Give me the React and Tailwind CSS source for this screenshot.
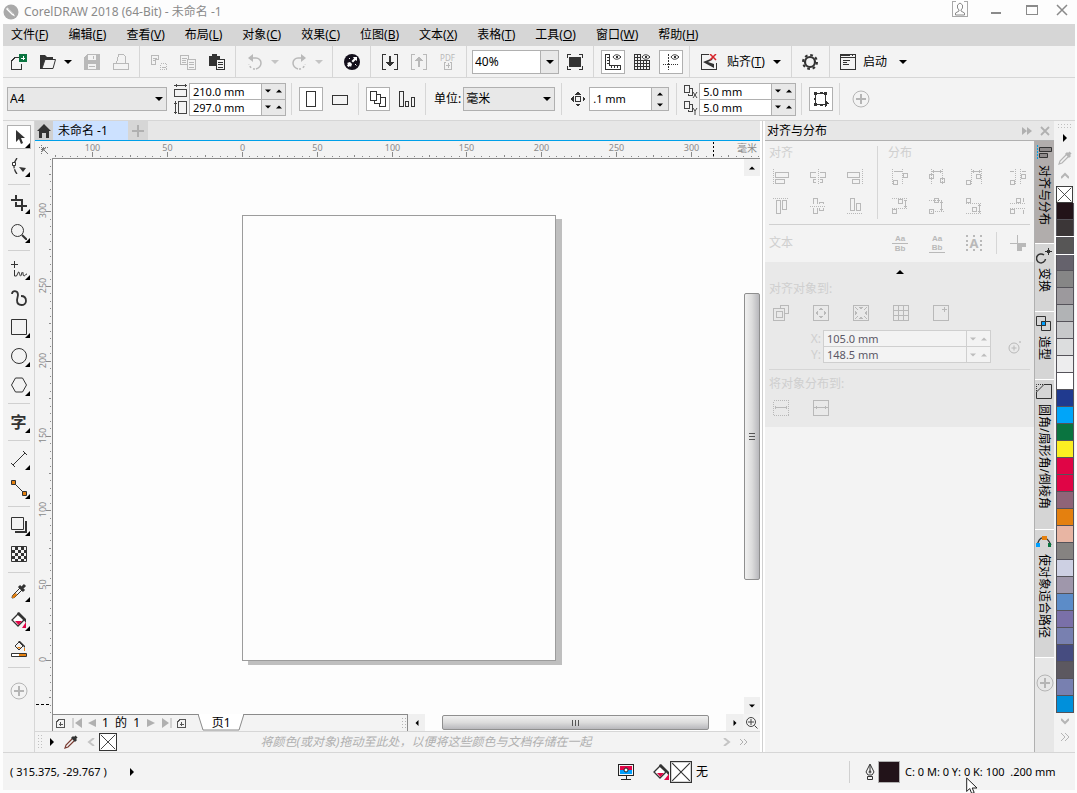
import { useState } from "react";

const menus = [
  ["文件", "F"],
  ["编辑", "E"],
  ["查看", "V"],
  ["布局", "L"],
  ["对象", "C"],
  ["效果", "C"],
  ["位图", "B"],
  ["文本", "X"],
  ["表格", "T"],
  ["工具", "O"],
  ["窗口", "W"],
  ["帮助", "H"],
];

const swatches = [
  "#221319", "#3b3637", "#575656", "#65626c", "#868686", "#9c999d", "#b1b3b5", "#c7c8ca",
  "#dcddde", "#ededee", "#ffffff", "#203a8f", "#00a5f9", "#0a7440", "#fbee22", "#e00546",
  "#e00546", "#8f6478", "#e4800f", "#e8b5a3", "#868381", "#cdd0e3", "#9f97ab", "#5c8cc8",
  "#7a70a8", "#7880b0", "#464c80", "#5c5860", "#7880b0", "#0090db",
];

// pixels per millimetre at 40% zoom
const SCALE = 1.496;

function Icon({ size = 16, children, smooth = false, className = "" }) {
  return (
    <svg
      width={size}
      height={size}
      viewBox={`0 0 ${size} ${size}`}
      fill="none"
      stroke="currentColor"
      shapeRendering={smooth ? "auto" : "crispEdges"}
      aria-hidden="true"
      className={`shrink-0 ${className}`}
    >
      {children}
    </svg>
  );
}

function Tri({ dir = "down", small = false }) {
  const d = {
    down: "M0 2h8L4 6z",
    up: "M0 6h8L4 2z",
    right: "M2 0v8l4-4z",
    left: "M6 0v8L2 4z",
  }[dir];
  return (
    <svg width={small ? 6 : 8} height={small ? 6 : 8} viewBox="0 0 8 8" fill="currentColor" aria-hidden="true" className="shrink-0">
      <path d={d} />
    </svg>
  );
}

function Sep() {
  return <div className="mx-1 h-8 w-px shrink-0 bg-[#d6d6d6]" />;
}

function ToolBtn({ label, active, disabled, children }) {
  return (
    <button
      type="button"
      aria-label={label}
      disabled={disabled}
      className={`flex w-[29px] shrink-0 items-center justify-center ${disabled ? "text-[#b9b9b9]" : "text-[#333]"}`}
    >
      <span className={`flex size-6 items-center justify-center ${active ? "border border-[#b0b0b0] bg-white" : ""}`}>
        {children}
      </span>
    </button>
  );
}

function DropArrow({ label, disabled }) {
  return (
    <button
      type="button"
      aria-label={label}
      className={`mr-1 flex w-[11px] shrink-0 justify-center ${disabled ? "text-[#c4c4c4]" : "text-black"}`}
    >
      <Tri />
    </button>
  );
}

function PlusCircle() {
  return (
    <Icon size={18} smooth className="text-[#b5b5b5]">
      <circle cx="9" cy="9" r="8" />
      <path d="M9 4v10M4 9h10" strokeWidth="2" />
    </Icon>
  );
}

/* ---------- icons that are used more than once ---------- */

function FillIcon() {
  return (
    <Icon size={18} smooth>
      <path d="M8 3L2 9l6 6 6-6z" strokeWidth="1.3" fill="#fff" />
      <path d="M7 2l2-1 8 8v4l-3-4-6-5z" fill="#333" stroke="none" />
      <path d="M5 10h7l-3.500 4z" fill="#e00546" stroke="none" />
      <path d="M17 11v6h-5z" fill="#e00546" stroke="none" />
    </Icon>
  );
}

function Eye() {
  return (
    <>
      <path d="M8 3c2-3 5-3 8 0-3 3-6 3-8 0z" shapeRendering="auto" />
      <circle cx="12" cy="3" r="1" />
    </>
  );
}

function Dropper({ tip = "currentColor" }) {
  return (
    <Icon smooth>
      <path d="M9 5L3 11l-1 3 3-1 6-6" stroke={tip} strokeWidth="1.2" />
      <path d="M9 3l4 4M11 5l2.500-2.500" strokeWidth="3" />
    </Icon>
  );
}

function DupIcon({ axis }) {
  return (
    <svg width="14" height="15" viewBox="0 0 14 15" fill="none" stroke="#444" shapeRendering="crispEdges" aria-hidden="true">
      <path d="M.5 1.500h5v7h-5zM5.500 4.500h3v7h-4v-2" />
      {axis === "x" ? <path d="M9 8l4 6M13 8l-4 6" shapeRendering="auto" /> : <path d="M9 8l2 3 2-3M11 11v4" shapeRendering="auto" />}
    </svg>
  );
}

function NoColor({ size, label }) {
  return (
    <button type="button" aria-label={label} className="shrink-0">
      <svg width={size} height={size} viewBox="0 0 20 20" fill="#fff" stroke="#333" aria-hidden="true">
        <rect x=".5" y=".5" width="19" height="19" strokeWidth="1.200" />
        <path d="M2 2l16 16M18 2L2 18" />
      </svg>
    </button>
  );
}

/* ---------- fields ---------- */

function SpinField({ label, value, width, dim = false }) {
  const [text, setText] = useState(value);
  const line = dim ? "border-[#cfcfcf]" : "border-[#b0b0b0]";
  return (
    <div className={`-mt-px flex h-[17px] border ${line}`}>
      <input
        aria-label={label}
        value={text}
        onChange={(e) => setText(e.target.value)}
        className={`${width} min-w-0 px-[3px] text-[11px] leading-[15px] outline-none ${dim ? "bg-[#f3f3f3] text-[#5c5866]" : "bg-white text-black"}`}
      />
      <div className={`flex w-6 shrink-0 items-center justify-around border-l ${line} ${dim ? "bg-[#f3f3f3] text-[#bdbdbd]" : "bg-[#e8e8e8] text-black"}`}>
        <button type="button" aria-label={`${label} -`}><Tri small /></button>
        <button type="button" aria-label={`${label} +`}><Tri small dir="up" /></button>
      </div>
    </div>
  );
}

function SelectField({ label, options, width, combo = false }) {
  return (
    <div className={`relative h-6 shrink-0 ${width}`}>
      <select
        aria-label={label}
        className={`h-full w-full appearance-none border border-[#b0b0b0] pl-[2px] text-[12px] outline-none ${combo ? "bg-white" : "bg-[#e8e8e8]"}`}
      >
        {options.map((o) => (
          <option key={o}>{o}</option>
        ))}
      </select>
      <span
        className={`pointer-events-none absolute inset-y-px right-px flex items-center justify-center ${combo ? "w-[18px] border-l border-[#b0b0b0] bg-[#e8e8e8]" : "w-[14px]"}`}
      >
        <Tri />
      </span>
    </div>
  );
}

/* ---------- title + menu ---------- */

function TitleBar() {
  return (
    <header className="flex h-6 shrink-0 items-center bg-[#fdfdfd] text-[#8a8a8a]">
      <Icon smooth className="text-[#a9a9a9]">
        <circle cx="8" cy="8" r="7.500" fill="#a9a9a9" stroke="none" />
        <path d="M4.500 3.500l6 6 1.500 3-3-1.500-6-6z" fill="#fff" stroke="none" />
        <path d="M5 4.500l5.500 5.500" stroke="#a9a9a9" />
      </Icon>
      <h1 className="ml-[5px] flex-1 text-[12px]">CorelDRAW 2018 (64-Bit) - 未命名 -1</h1>
      <div className="flex h-full items-start gap-5 pr-[5px]">
        <button type="button" aria-label="登录" className="mt-px">
          <Icon>
            <path d="M4 .5H.5v15h15V.5H12" stroke="#a8a8a8" />
            <path d="M5.500 4v3l1.500 2v1L3.500 12v2h9v-2L9 10V9l1.500-2V4L8 2z" stroke="#8a8a8a" shapeRendering="auto" />
          </Icon>
        </button>
        <button type="button" aria-label="最小化" className="mt-1">
          <Icon><path d="M3 9h10" strokeWidth="2" /></Icon>
        </button>
        <button type="button" aria-label="最大化" className="mt-1">
          <Icon><path d="M2.500 1.500h11v9h-11zM2 2h12" /></Icon>
        </button>
        <button type="button" aria-label="关闭" className="mt-1 -ml-[6px]">
          <Icon smooth><path d="M3 1l10 10M13 1L3 11" strokeWidth="1.500" /></Icon>
        </button>
      </div>
    </header>
  );
}

function MenuBar() {
  return (
    <nav className="flex h-[22px] shrink-0 items-center gap-5 bg-[#d6d6d6] pl-2">
      {menus.map(([name, key]) => (
        <button key={name} type="button" className="whitespace-nowrap">
          {name}(<u>{key}</u>)
        </button>
      ))}
    </nav>
  );
}

/* ---------- standard toolbar ---------- */

function StandardBar() {
  return (
    <div className="flex h-8 shrink-0 items-center border-b border-[#d6d6d6] pl-px">
      <ToolBtn label="新建">
        <Icon>
          <path d="M8 3.500H4L.5 7v8.500h10V10" />
          <path d="M8 0h8v8H8z" fill="#0a7440" stroke="none" />
          <path d="M12 2v4M10 4h4" stroke="#fff" />
        </Icon>
      </ToolBtn>
      <ToolBtn label="打开">
        <Icon smooth>
          <path d="M0 15V1h5l2 2h6v3H5L2 15z" fill="#333" stroke="none" />
          <path d="M5 5.500h10.500L13 14.500H2z" fill="#f3f3f3" />
        </Icon>
      </ToolBtn>
      <DropArrow label="打开最近" />
      <ToolBtn label="保存" disabled>
        <Icon>
          <path d="M0 3l3-3h13v16H0z" fill="currentColor" stroke="none" />
          <path d="M4 1h8v5H4zM4 10h8v5H4z" fill="#f3f3f3" stroke="none" />
          <path d="M9.500 2v3M5 12h6" />
        </Icon>
      </ToolBtn>
      <ToolBtn label="打印" disabled>
        <Icon><path d="M.5 9.500h3l2-9h5l2 2v7h3v6H.5zM4 9.500h8" /></Icon>
      </ToolBtn>
      <Sep />
      <ToolBtn label="剪切" disabled>
        <Icon>
          <path d="M.5 10.500v-9h7v4h-3v5zM2 4h4M2 6h2" />
          <path d="M9.500 9.500h6v6h-6z" strokeDasharray="1 1" />
          <path d="M11 13h4" />
        </Icon>
      </ToolBtn>
      <ToolBtn label="复制" disabled>
        <Icon><path d="M8 10.500H.5v-9h8V5M2 4h5M2 6h4M2 8h4M7.500 5.500h8v10h-8zM9 8h5M9 10.500h5M9 13h5" /></Icon>
      </ToolBtn>
      <ToolBtn label="粘贴">
        <Icon>
          <path d="M0 2h3V0h5v2h3v3H7v7H0z" fill="#333" stroke="none" />
          <path d="M7.500 5.500h8v10h-8zM9 8h5M9 10.500h5M9 13h5" />
        </Icon>
      </ToolBtn>
      <Sep />
      <ToolBtn label="撤消" disabled>
        <Icon smooth>
          <path d="M4 4h5a5 5 0 0 1 5 5c0 3-2 5-5 6" strokeWidth="1.500" />
          <path d="M8 15a6 6 0 0 1-6-5" strokeDasharray="2 2" strokeWidth="1.500" />
          <path d="M1 4l5-4v8z" fill="currentColor" stroke="none" />
        </Icon>
      </ToolBtn>
      <DropArrow label="撤消列表" disabled />
      <ToolBtn label="重做" disabled>
        <Icon smooth>
          <path d="M12 4H7a5 5 0 0 0-5 5c0 3 2 5 5 6" strokeWidth="1.500" />
          <path d="M8 15a6 6 0 0 0 6-5" strokeDasharray="2 2" strokeWidth="1.500" />
          <path d="M15 4l-5-4v8z" fill="currentColor" stroke="none" />
        </Icon>
      </ToolBtn>
      <DropArrow label="重做列表" disabled />
      <Sep />
      <ToolBtn label="搜索内容">
        <Icon smooth>
          <circle cx="8" cy="8" r="8" fill="#14101c" stroke="none" />
          <path d="M9 3h4v4l-1.500-1-2.500 2.500L7.500 7 10 4.500zM3 9l3-1 2 2-1 3-1-1-1.500 1L3 11.500 4 10z" fill="#fff" stroke="none" />
          <path d="M11 10l1.500 1.500M5 4l1 1" stroke="#fff" />
        </Icon>
      </ToolBtn>
      <Sep />
      <ToolBtn label="导入">
        <Icon>
          <path d="M4 .5H.5v15H4M12 .5h3.500v15H12" />
          <path d="M8 2v8" strokeWidth="2" />
          <path d="M4 8h8l-4 5z" fill="currentColor" stroke="none" />
        </Icon>
      </ToolBtn>
      <ToolBtn label="导出" disabled>
        <Icon>
          <path d="M4 .5H.5v15H4M12 .5h3.500v15H12" />
          <path d="M8 6v7" strokeWidth="2" />
          <path d="M4 7h8L8 2z" fill="currentColor" stroke="none" />
        </Icon>
      </ToolBtn>
      <ToolBtn label="发布为 PDF" disabled>
        <span className="flex flex-col items-center">
          <span className="text-[8px] leading-[8px]">PDF</span>
          <Icon size={8}><path d="M2 .5H.5v7h7v-7H6M4 1v5M2 3.500h4" /></Icon>
        </span>
      </ToolBtn>
      <Sep />
      <SelectField label="缩放级别" options={["40%", "100%", "200%"]} width="ml-px w-[87px]" combo />
      <div className="w-px" />
      <ToolBtn label="全屏预览">
        <Icon>
          <path d="M0 4V.5h4M12 .5h3.500V4M15.500 12v3.500H12M4 15.500H.5V12" />
          <path d="M2 3h12v10H2z" fill="currentColor" stroke="none" />
        </Icon>
      </ToolBtn>
      <Sep />
      <ToolBtn label="显示标尺" active>
        <Icon>
          <path d="M.5.5h4v11h11v4H.5zM2 3h2M2 6h2M2 9h2M6 14v-2M9 14v-2M12 14v-2" />
          <Eye />
        </Icon>
      </ToolBtn>
      <ToolBtn label="显示网格">
        <Icon>
          <path d="M7 .5H.5v15h15V7M0 3.500h7M0 6.500h16M0 9.500h16M0 12.500h16M3.500 0v16M6.500 0v16M9.500 6v10M12.500 6v10" />
          <Eye />
        </Icon>
      </ToolBtn>
      <ToolBtn label="显示辅助线" active>
        <Icon>
          <path d="M5.500 0v16" strokeDasharray="2 1" />
          <path d="M0 10.500h16" strokeDasharray="1 1" />
          <Eye />
        </Icon>
      </ToolBtn>
      <Sep />
      <ToolBtn label="关闭贴齐">
        <Icon smooth>
          <path d="M8 .5H.5v15h15V9" shapeRendering="crispEdges" />
          <path d="M2 8l10-4-1 2-4 2 6 2v4z" fill="currentColor" stroke="none" />
          <path d="M9 0l6 6M15 0L9 6" stroke="#d8232a" strokeWidth="1.500" />
        </Icon>
      </ToolBtn>
      <button type="button" className="ml-1 flex items-center whitespace-nowrap">
        <span>贴齐(<u>T</u>)</span>
        <span className="ml-2"><Tri /></span>
      </button>
      <div className="w-[6px]" />
      <Sep />
      <ToolBtn label="选项">
        <Icon smooth>
          <circle cx="8" cy="8" r="5" strokeWidth="2.200" />
          <circle cx="8" cy="8" r="7" strokeWidth="2" strokeDasharray="2.750 2.750" />
        </Icon>
      </ToolBtn>
      <Sep />
      <ToolBtn label="应用程序启动器">
        <Icon><path d="M.5.5h15v15H.5zM0 1.500h10M12 1.500h1M0 3.500h16M3 6.500h7M3 8.500h4M3 10.500h6" /></Icon>
      </ToolBtn>
      <button type="button" className="flex items-center whitespace-nowrap">
        <span>启动</span>
        <span className="ml-3"><Tri /></span>
      </button>
    </div>
  );
}

/* ---------- property bar ---------- */

function PropertyBar() {
  return (
    <div className="flex h-[43px] shrink-0 items-center border-b border-[#d6d6d6] pl-1">
      <SelectField label="页面大小" options={["A4", "A3", "Letter"]} width="w-[160px]" />
      <div className="ml-[7px] flex w-[14px] shrink-0 flex-col gap-1">
        <svg width="14" height="13" viewBox="0 0 14 13" fill="none" stroke="#444" shapeRendering="crispEdges" aria-hidden="true">
          <path d="M.5 5.500h12v7H.5zM0 1.500h13M2 0v3M11 0v3" />
        </svg>
        <svg width="14" height="13" viewBox="0 0 14 13" fill="none" stroke="#444" shapeRendering="crispEdges" aria-hidden="true">
          <path d="M4.500.5h8v12h-8zM1.500 0v13M0 2h3M0 11h3" />
        </svg>
      </div>
      <div className="ml-px shrink-0 pt-px">
        <SpinField label="页面宽度" value="210.0 mm" width="w-[71px]" />
        <SpinField label="页面高度" value="297.0 mm" width="w-[71px]" />
      </div>
      <div className="w-px" />
      <Sep />
      <ToolBtn label="纵向" active>
        <Icon><path d="M3.500.5h9v15h-9z" /></Icon>
      </ToolBtn>
      <ToolBtn label="横向">
        <Icon><path d="M.5 4.500h15v9H.5z" /></Icon>
      </ToolBtn>
      <Sep />
      <ToolBtn label="所有页面" active>
        <Icon><path d="M.5.5h6v9h-6zM6.500 3.500h4v9h-6v-3M10.500 6.500h5v9h-6v-3" /></Icon>
      </ToolBtn>
      <ToolBtn label="当前页">
        <Icon><path d="M.5.5h4v15h-4zM6.500 10.500h3v5h-3zM12.500 6.500h3v9h-3z" /></Icon>
      </ToolBtn>
      <Sep />
      <div className="ml-1 flex shrink-0 items-center gap-[2px]">
        <span>单位:</span>
        <SelectField label="单位" options={["毫米", "厘米", "英寸"]} width="w-[92px]" />
      </div>
      <div className="w-[2px]" />
      <Sep />
      <div className="ml-1 flex shrink-0 items-center gap-[3px] text-[#333]">
        <Icon>
          <path d="M5.500 5.500h5v5h-5z" />
          <path d="M5 3.500h6L8 0zM5 12.500h6L8 16zM3.500 5v6L0 8zM12.500 5v6L16 8z" fill="currentColor" stroke="none" />
        </Icon>
        <div className="flex h-6 border border-[#b0b0b0]">
          <input aria-label="微调距离" defaultValue=".1 mm" className="w-[61px] bg-white px-[3px] text-[11px] text-black outline-none" />
          <div className="flex w-[17px] flex-col items-center justify-around border-l border-[#b0b0b0] bg-[#e8e8e8] text-black">
            <button type="button" aria-label="微调 +"><Tri small dir="up" /></button>
            <button type="button" aria-label="微调 -"><Tri small /></button>
          </div>
        </div>
      </div>
      <div className="w-[3px]" />
      <Sep />
      <div className="ml-[3px] flex shrink-0 flex-col gap-px">
        <DupIcon axis="x" />
        <DupIcon axis="y" />
      </div>
      <div className="ml-px shrink-0 pt-px">
        <SpinField label="再制距离 X" value="5.0 mm" width="w-[71px]" />
        <SpinField label="再制距离 Y" value="5.0 mm" width="w-[71px]" />
      </div>
      <div className="w-px" />
      <Sep />
      <ToolBtn label="将所有对象视为已填充" active>
        <Icon>
          <path d="M2.500 2.500h10v11h-10z" />
          <path d="M1 1h3v3H1zM7 1h3v2H7zM11 1h3v3h-3zM1 12h3v3H1zM7 13h3v2H7zM1 7h2v2H1z" fill="currentColor" stroke="none" />
          <path d="M12 9l4 4h-2l1 3-1-1-2 1z" fill="currentColor" stroke="none" />
        </Icon>
      </ToolBtn>
      <Sep />
      <button type="button" aria-label="快速自定义" className="ml-2">
        <PlusCircle />
      </button>
    </div>
  );
}

/* ---------- toolbox ---------- */

const toolGroups = [
  [
    { name: "选择", fly: true, active: true, art: <path d="M5 1v12l3-3 2 5 2-1-2-5h4z" fill="currentColor" stroke="none" /> },
    {
      name: "形状",
      fly: true,
      art: (
        <>
          <path d="M6 0C2 5 2 11 6 16" strokeWidth="1.300" strokeDasharray="11 1" />
          <path d="M1.500 4.500h3v3h-3z" fill="#fff" />
          <path d="M8 9l7 1-3 4z" fill="currentColor" stroke="none" />
        </>
      ),
    },
  ],
  [
    { name: "裁剪", fly: true, art: <path d="M0 5h11v6h5M5 0v6M5 7v4h11M11 5v11" strokeWidth="2" /> },
    {
      name: "缩放",
      fly: true,
      art: (
        <>
          <circle cx="6.500" cy="6.500" r="6" />
          <path d="M11 11l5 5" strokeWidth="2" />
        </>
      ),
    },
  ],
  [
    { name: "手绘", fly: true, art: <path d="M3.500 0v7M0 3.500h7M3.500 9v6h2l2-4c1-1 1 4 2 4s1-4 2-4 0 4 1.500 4 1-2 3-2" /> },
    { name: "艺术笔", art: <path d="M1 4c0-4 6-4 6 1l-1 5c0 7 9 6 9 1 0-3-2-5-5-5" strokeWidth="1.800" /> },
    { name: "矩形", fly: true, art: <path d="M.5.5h15v15H.5z" /> },
    { name: "椭圆形", fly: true, art: <circle cx="8" cy="8" r="7.500" /> },
    { name: "多边形", fly: true, art: <path d="M4.500 1h7L15.500 8l-4 7h-7L.5 8z" /> },
  ],
  [{ name: "文本", fly: true, text: "字" }],
  [
    { name: "平行度量", fly: true, art: <path d="M2 14L14 2M0 12l4 4M12 0l4 4" /> },
    {
      name: "连接器",
      fly: true,
      art: (
        <>
          <path d="M3 3l10 10" />
          <path d="M.5.5h4v4h-4zM11.500 11.500h4v4h-4z" fill="#e4800f" />
        </>
      ),
    },
  ],
  [
    {
      name: "阴影",
      fly: true,
      art: (
        <>
          <path d="M.5.5h12v12H.5z" />
          <path d="M15 4v11H4" strokeWidth="2" />
        </>
      ),
    },
    {
      name: "透明度",
      art: (
        <>
          <path d="M.5.5h15v15H.5z" />
          {[1, 4, 7, 10, 13].map((y, r) =>
            [1, 4, 7, 10, 13].map((x, c) =>
              (r + c) % 2 ? <rect key={`${x}-${y}`} x={x} y={y} width="3" height="3" fill="currentColor" stroke="none" /> : null
            )
          )}
        </>
      ),
    },
  ],
  [
    {
      name: "颜色滴管",
      fly: true,
      art: (
        <>
          <path d="M9 5L1.500 12.500 1 15l2.500-.5L11 7" />
          <path d="M1 15l1-3 3-2 1 2-3 3z" fill="#e4800f" stroke="none" />
          <path d="M8 3l5 5M11 5l3-3" strokeWidth="3" />
        </>
      ),
    },
    {
      name: "交互式填充",
      fly: true,
      art: (
        <>
          <path d="M7 2L1 8l6 6 6-6z" strokeWidth="1.300" fill="#fff" />
          <path d="M6 1l2-1 7 7v4l-3-4-5-4z" fill="currentColor" stroke="none" />
          <path d="M4 9h7l-3.500 4z" fill="#e00546" stroke="none" />
          <path d="M15 10v6h-4z" fill="#e00546" stroke="none" />
        </>
      ),
    },
    {
      name: "智能填充",
      art: (
        <>
          <path d="M8 1L4 5l4 4 4-4z" />
          <path d="M7 0h2l5 5v2l-2-2z" fill="currentColor" stroke="none" />
          <path d="M6 6h4l-2 2zM13 7h1v3h-1z" fill="#e4800f" stroke="none" />
          <path d="M.5 12.500h15v3H.5z" fill="#fff" />
          <path d="M8 13h7v2H8z" fill="#e4800f" stroke="none" />
        </>
      ),
    },
  ],
];

function Toolbox() {
  return (
    <aside className="flex w-8 shrink-0 flex-col items-center border-r border-[#d6d6d6] pt-px">
      {toolGroups.map((group, i) => (
        <div key={i} className="flex flex-col items-center">
          {group.map((tool) => (
            <button
              key={tool.name}
              type="button"
              aria-label={tool.name}
              className="relative flex h-[29px] w-[29px] items-center justify-center text-[#333]"
            >
              <span className={`flex size-6 items-center justify-center ${tool.active ? "border border-[#b0b0b0] bg-white" : ""}`}>
                {tool.text ? <span className="text-[16px] leading-4 font-bold">{tool.text}</span> : <Icon smooth>{tool.art}</Icon>}
              </span>
              {tool.fly && (
                <svg width="5" height="5" viewBox="0 0 4 4" className="absolute right-[3px] bottom-[3px] fill-black" aria-hidden="true">
                  <path d="M4 0v4H0z" />
                </svg>
              )}
            </button>
          ))}
          <div className="mt-1 mb-[3px] h-px w-[22px] bg-[#d0d0d0]" />
        </div>
      ))}
      <button type="button" aria-label="自定义工具箱" className="flex h-10 items-center">
        <PlusCircle />
      </button>
    </aside>
  );
}

/* ---------- drawing window ---------- */

// tick every 5 mm, a taller one every 25 mm, numbered ones every 50 mm
function tickSize(mm) {
  if (mm % 50 === 0) return 5;
  return mm % 25 === 0 ? 2 : 1;
}

function HRuler() {
  const ticks = [];
  for (let mm = -125; mm <= 1200; mm += 5) ticks.push(mm);
  return (
    <div className="relative h-[18px] min-w-0 flex-1 overflow-hidden border-b border-[#8a8a8a]">
      <svg width="100%" height="17" shapeRendering="crispEdges" aria-hidden="true">
        {ticks.map((mm) => {
          const x = Math.round(190 + mm * SCALE) + 0.5;
          const size = tickSize(mm);
          return (
            <g key={mm}>
              <path d={`M${x} ${16 - size}V16`} stroke="#8a8a8a" />
              {size === 5 && mm < 350 && (
                <text x={x} y="10" textAnchor="middle" fontSize="9" fill="#8a8a8a">{Math.abs(mm)}</text>
              )}
            </g>
          );
        })}
        <path d="M661.500 1V16" stroke="#000" strokeDasharray="2 2" />
      </svg>
      <span className="absolute top-px right-[3px] bg-[#f3f3f3] text-[10px] leading-3 text-[#8a8a8a]">毫米</span>
    </div>
  );
}

function VRuler() {
  const ticks = [];
  for (let mm = 335; mm >= -600; mm -= 5) ticks.push(mm);
  return (
    <div className="w-[18px] shrink-0 overflow-hidden border-r border-[#8a8a8a]">
      <svg width="17" height="100%" shapeRendering="crispEdges" aria-hidden="true">
        {ticks.map((mm) => {
          const y = Math.round(501 - mm * SCALE) + 0.5;
          const size = tickSize(mm);
          return (
            <g key={mm}>
              <path d={`M${16 - size} ${y}H16`} stroke="#8a8a8a" />
              {size === 5 && mm >= 0 && (
                <text transform={`translate(11 ${y - 1}) rotate(-90)`} textAnchor="middle" fontSize="9" fill="#8a8a8a">{mm}</text>
              )}
            </g>
          );
        })}
        <path d="M1 545.500H16" stroke="#000" strokeDasharray="3 2" />
      </svg>
    </div>
  );
}

function PageNav() {
  return (
    <div className="flex h-[17px] shrink-0 items-stretch">
      <div className="ml-[17px] flex w-[356px] shrink-0 items-center border-x border-t border-[#8a8a8a]">
        <div className="flex items-center gap-[5px] pl-[3px] text-[#b0b0b0]">
          <button type="button" aria-label="在前面添加页面" className="text-[#555]">
            <Icon size={9}><path d="M3 .5h5.500v8h-8V3zM4.500 3v4M2.500 5h4" /></Icon>
          </button>
          <button type="button" aria-label="首页" className="ml-[2px]">
            <Icon size={10} smooth><path d="M1 0v10" /><path d="M10 0v10L3 5z" fill="currentColor" stroke="none" /></Icon>
          </button>
          <button type="button" aria-label="上一页" className="mx-px"><Icon size={8} smooth><path d="M8 0v8L0 4z" fill="currentColor" stroke="none" /></Icon></button>
          <span className="whitespace-pre text-black">{"1  的  1"}</span>
          <button type="button" aria-label="下一页" className="mx-[2px]"><Icon size={8} smooth><path d="M0 0v8l8-4z" fill="currentColor" stroke="none" /></Icon></button>
          <button type="button" aria-label="末页">
            <Icon size={10} smooth><path d="M9 0v10" /><path d="M0 0v10l7-5z" fill="currentColor" stroke="none" /></Icon>
          </button>
          <button type="button" aria-label="在后面添加页面" className="text-[#555]">
            <Icon size={9}><path d="M3 .5h5.500v8h-8V3zM4.500 3v4M2.500 5h4" /></Icon>
          </button>
        </div>
        <button type="button" className="relative ml-3 h-4 w-[46px] text-center">
          <svg width="46" height="17" viewBox="0 0 46 17" className="absolute -top-px left-0" aria-hidden="true">
            <path d="M0 0l5 16h36l5-16z" fill="#fff" stroke="#8a8a8a" />
            <path d="M1 0h44" stroke="#fff" strokeWidth="2" />
          </svg>
          <span className="relative block leading-[14px]">页1</span>
        </button>
        <div className="mr-px ml-auto h-3 w-[5px] bg-[radial-gradient(#b5b5b5_1px,transparent_1px)] bg-[size:3px_3px]" />
      </div>
      <button type="button" aria-label="向左滚动" className="flex w-[17px] shrink-0 items-center justify-center bg-[#f0f0f0]"><Tri dir="left" small /></button>
      <div className="flex min-w-0 flex-1 bg-[#fdfdfd] px-[17px] py-px">
        <div className="flex flex-1 items-center justify-center gap-[2px] rounded-xs border border-[#8f8f8f] bg-linear-to-b from-[#f0f0f0] via-[#dcdcdc] to-[#b8b8bc]">
          {[0, 1, 2].map((n) => <span key={n} className="h-[6px] w-px bg-[#555]" />)}
        </div>
      </div>
      <button type="button" aria-label="向右滚动" className="flex w-[17px] shrink-0 items-center justify-center bg-[#f0f0f0]"><Tri dir="right" small /></button>
      <button type="button" aria-label="导航器" className="flex w-[17px] shrink-0 items-center justify-center text-[#444]">
        <Icon size={12} smooth>
          <circle cx="5" cy="5" r="4.500" />
          <path d="M5 2v6M2 5h6M8.500 8.500l3 3" />
        </Icon>
      </button>
    </div>
  );
}

function DocPalette() {
  return (
    <div className="flex h-[21px] shrink-0 items-center border-t border-[#d6d6d6]">
      <div className="ml-[2px] h-4 w-[6px] bg-[radial-gradient(#c0c0c0_1px,transparent_1px)] bg-[size:3px_3px]" />
      <button type="button" aria-label="调色板菜单" className="ml-[5px]"><Tri dir="right" /></button>
      <button type="button" aria-label="滴管" className="ml-[7px] text-[#333]"><Dropper tip="#7a3c32" /></button>
      <button type="button" aria-label="向左" className="ml-2 text-[#c4c4c4]">
        <Icon size={8} smooth><path d="M7 0L2 4l5 4" strokeWidth="2" /></Icon>
      </button>
      <div className="ml-1 flex"><NoColor size={18} label="无填充" /></div>
      <p className="flex-1 pl-3 text-center text-[12px] text-[#b0b0b0] italic">将颜色(或对象)拖动至此处，以便将这些颜色与文档存储在一起</p>
      <button type="button" aria-label="向右" className="text-[#c4c4c4]">
        <Icon size={8} smooth><path d="M1 0l5 4-5 4" strokeWidth="2" /></Icon>
      </button>
      <button type="button" aria-label="展开调色板" className="mr-3 ml-[9px] text-[#b0b0b0]">
        <Icon size={8} smooth><path d="M0 1l3 3-3 3M4 1l3 3-3 3" /></Icon>
      </button>
    </div>
  );
}

function DrawingWindow() {
  return (
    <main className="flex min-w-0 flex-1 flex-col">
      <div className="flex h-5 shrink-0 items-stretch border-b border-[#00a0e9] bg-[#e7e7e7]">
        <button type="button" aria-label="欢迎屏幕" className="flex w-[18px] items-center justify-center bg-[#d0d0d0] text-[#333]">
          <Icon size={14} smooth><path d="M7 0l7 7h-2v7H9V9H5v5H2V7H0z" fill="currentColor" stroke="none" /></Icon>
        </button>
        <button type="button" className="w-[75px] bg-[#cce1ff] text-left"><span className="pl-[5px]">未命名 -1</span></button>
        <button type="button" aria-label="新文档" className="flex w-5 items-center justify-center bg-[#d6d6d6] text-[#b0b0b0]">
          <Icon size={12}><path d="M6 0v12M0 6h12" strokeWidth="2" /></Icon>
        </button>
      </div>
      <div className="flex shrink-0">
        <div className="flex w-[17px] shrink-0 justify-center pt-1 text-[#777]">
          <Icon size={10} smooth>
            <path d="M2.500 0v10M0 2.500h10" strokeDasharray="1 1" />
            <path d="M3 3l6 6" />
            <path d="M3 3h4L3 7z" fill="currentColor" stroke="none" />
          </Icon>
        </div>
        <HRuler />
      </div>
      <div className="flex min-h-0 flex-1">
        <VRuler />
        <div className="min-w-0 flex-1 overflow-hidden bg-[#fdfdfd] pt-14 pl-[189px]">
          <div className="h-[446px] w-[314px] border border-[#9c9c9c] bg-[#fdfdfd] shadow-[6px_4px_0_#bfbfbf]" />
        </div>
        <div className="flex w-4 shrink-0 flex-col items-center justify-between bg-[#fdfdfd]">
          <button type="button" aria-label="向上滚动" className="flex h-[17px] w-full items-center justify-center bg-[#f0f0f0]"><Tri dir="up" small /></button>
          <div className="flex h-[287px] w-full flex-col items-center justify-center gap-[2px] rounded-xs border border-[#8f8f8f] bg-linear-to-r from-[#f0f0f0] via-[#dcdcdc] to-[#b8b8bc]">
            {[0, 1, 2].map((n) => <span key={n} className="h-px w-[6px] bg-[#555]" />)}
          </div>
          <button type="button" aria-label="向下滚动" className="flex h-[17px] w-full items-center justify-center bg-[#f0f0f0]"><Tri small /></button>
        </div>
      </div>
      <PageNav />
      <DocPalette />
    </main>
  );
}

/* ---------- align & distribute docker ---------- */

const alignIcons = [
  ["左对齐", "M2.500 3.500h13v5h-13zM2.500 10.500h9v4h-9z", "M.5 0v16"],
  ["水平居中对齐", "M6 3.500H.5v5H6M10 3.500h5.500v5H10M6 10.500H3.500v3H6M10 10.500h2.500v3H10", "M8.500 0v16"],
  ["右对齐", "M.5 3.500h12v5H.5zM5.500 10.500h7v4h-7z", "M15.500 0v16"],
  ["顶端对齐", "M3.500 2.500h4v13h-4zM9.500 2.500h4v9h-4z", "M0 .5h16"],
  ["垂直居中对齐", "M3.500 6V.5h4V6M3.500 10v5.500h4V10M9.500 6V4.500h4V6M9.500 10v2.500h4V10", "M0 8.500h16"],
  ["底端对齐", "M3.500.5h4v12h-4zM9.500 5.500h4v7h-4z", "M0 15.500h16"],
];

const distIcons = [
  ["左分散排列", "M11.500 4.500h4v4h-4zM1.500 11.500h4v4h-4zM2 2.500h8", "M.5 0v16M10.500 0v16"],
  ["水平分散排列中心", "M.5 5.500h4v4h-4zM11.500 9.500h4v4h-4zM3 2.500h10M4.500 1v3M11.500 1v3", "M2.500 0v16M13.500 0v16"],
  ["右分散排列", "M10.500 5.500h4v4h-4zM.5 11.500h4v4h-4zM6 2.500h9M7.500 1v3M13.500 1v3", "M5.500 0v16M15.500 0v16"],
  ["水平分散排列间距", "M.5 11.500h4v4h-4zM11.500 5.500h4v4h-4zM0 2.500h4M12 2.500h4", "M5.500 0v16M10.500 0v16"],
  ["顶部分散排列", "M6.500 1.500h4v4h-4zM.5 11.500h4v4h-4zM13.500 2v8M12 2.500h3M12 8.500h3", "M0 .5h16M0 10.500h16"],
  ["垂直分散排列中心", "M5.500.5h4v4h-4zM.5 11.500h4v4h-4zM12.500 3v10M11 4.500h3M11 11.500h3", "M0 2.500h14M0 13.500h16"],
  ["底部分散排列", "M.5.5h4v4h-4zM6.500 9.500h4v4h-4zM13.500 6v9M12 7.500h3M12 13.500h3", "M0 5.500h16M0 15.500h16"],
  ["垂直分散排列间距", "M6.500.5h4v4h-4zM.5 11.500h4v4h-4zM13.500 0v4M13.500 12v4", "M0 5.500h16M0 10.500h16"],
];

function LineIcon({ item }) {
  const [name, solid, dots] = item;
  return (
    <button type="button" aria-label={name} disabled className="w-4 text-[#b9b9b9]">
      <Icon>
        <path d={solid} />
        <path d={dots} strokeDasharray="1 1" />
      </Icon>
    </button>
  );
}

function TextAlignIcon({ name, underline }) {
  return (
    <button
      type="button"
      aria-label={name}
      disabled
      className="flex w-4 flex-col text-center font-['Liberation_Sans',sans-serif] text-[8px] leading-[9px] font-bold text-[#b9b9b9]"
    >
      <span className={underline ? "" : "border-b border-[#b9b9b9]"}>Aa</span>
      <span className={underline ? "border-b border-[#b9b9b9]" : ""}>Bb</span>
    </button>
  );
}

function Docker() {
  return (
    <section className="flex min-w-0 flex-1 flex-col bg-[#f3f3f3]">
      <div className="h-[121px] shrink-0 px-1">
        <div className="flex border-b border-[#d0d0d0] py-1">
          <div className="w-[108px] text-[#cfcfcf]">
            <div className="leading-4">对齐</div>
            <div className="mt-2 grid w-[115px] grid-cols-[37px_37px_37px] gap-y-[13px] pl-1">
              {alignIcons.map((it) => <LineIcon key={it[0]} item={it} />)}
            </div>
          </div>
          <div className="my-px w-px bg-[#d6d6d6]" />
          <div className="flex-1 pl-[10px] text-[#cfcfcf]">
            <div className="leading-4">分布</div>
            <div className="mt-2 grid grid-cols-[37px_37px_1fr_16px] gap-y-[13px] pr-1 pb-[6px] pl-1">
              {distIcons.map((it) => <LineIcon key={it[0]} item={it} />)}
            </div>
          </div>
        </div>
        <div className="flex h-9 items-center text-[#cfcfcf]">
          <span className="w-[123px]">文本</span>
          <div className="w-[37px]"><TextAlignIcon name="首行基线" /></div>
          <div className="w-[37px]"><TextAlignIcon name="末行基线" underline /></div>
          <button type="button" aria-label="装订框" disabled className="relative flex size-4 items-center justify-center text-[#b9b9b9]">
            <Icon className="absolute inset-0">
              <path d="M0 1h16M0 15h16" strokeWidth="2" strokeDasharray="2 5" />
              <path d="M1 5v6M15 5v6" strokeWidth="2" strokeDasharray="2 2" />
            </Icon>
            <span className="text-[13px] leading-4 font-bold">A</span>
          </button>
          <div className="ml-auto h-[22px] w-px bg-[#d6d6d6]" />
          <button type="button" aria-label="指定点" disabled className="mr-1 ml-[13px] text-[#b9b9b9]">
            <Icon>
              <path d="M7.500 0v16M0 8.500h16" />
              <path d="M8 8h8v4h-4v4H8z" fill="currentColor" stroke="none" />
            </Icon>
          </button>
        </div>
      </div>
      <div className="h-[165px] shrink-0 bg-[#e9e9e9] px-1 text-[#cfcfcf]">
        <button type="button" aria-label="收起" className="flex h-[19px] w-full items-center justify-center text-black"><Tri dir="up" /></button>
        <div className="leading-4">对齐对象到:</div>
        <div className="mt-2 flex gap-6 pl-1 text-[#b9b9b9]">
          <button type="button" aria-label="活动对象" disabled>
            <Icon><path d="M.5 3.500h11v12H.5zM3.500 6.500h6v6h-6zM7 3V.5h8.500v8H12" /></Icon>
          </button>
          <button type="button" aria-label="页面边缘" disabled>
            <Icon>
              <path d="M.5.5h15v15H.5z" />
              <path d="M6 5l2-3 2 3zM6 11l2 3 2-3zM5 6L2 8l3 2zM11 6l3 2-3 2z" fill="currentColor" stroke="none" />
            </Icon>
          </button>
          <button type="button" aria-label="页面中心" disabled>
            <Icon>
              <path d="M.5.5h15v15H.5zM2 2l3 3M14 2l-3 3M2 14l3-3M14 14l-3-3" />
              <path d="M6 2h4L8 5zM6 14h4l-2-3zM2 6v4l3-2zM14 6v4l-3-2z" fill="currentColor" stroke="none" />
            </Icon>
          </button>
          <button type="button" aria-label="网格" disabled>
            <Icon><path d="M.5.5h15v15H.5zM0 5.500h16M0 10.500h16M5.500 0v16M10.500 0v16" /></Icon>
          </button>
          <button type="button" aria-label="指定点位置" disabled>
            <Icon><path d="M.5.5h15v15H.5zM11.500 2v5M9 4.500h5" /></Icon>
          </button>
        </div>
        <div className="mt-[10px] flex items-center">
          <div className="w-[52px] text-right leading-4">
            <div>X:</div>
            <div>Y:</div>
          </div>
          <div className="ml-[2px]">
            <SpinField label="X" value="105.0 mm" width="w-[142px]" dim />
            <SpinField label="Y" value="148.5 mm" width="w-[142px]" dim />
          </div>
          <button type="button" aria-label="拾取点" disabled className="mr-2 ml-auto text-[#b9b9b9]">
            <Icon size={14} smooth>
              <circle cx="6" cy="8" r="5" />
              <path d="M6 5.500v5M3.500 8h5" />
              <circle cx="12" cy="2" r=".5" />
            </Icon>
          </button>
        </div>
        <div className="mt-[6px] border-t border-[#d6d6d6] pt-[6px] leading-4">将对象分布到:</div>
        <div className="mt-2 flex gap-6 pl-1 text-[#b9b9b9]">
          <button type="button" aria-label="选定范围" disabled>
            <Icon><path d="M.5.5h15v15H.5z" strokeDasharray="1 1" /><path d="M2 7.500h12M2.500 6v3M13.500 6v3" /></Icon>
          </button>
          <button type="button" aria-label="页面范围" disabled>
            <Icon><path d="M.5.5h15v15H.5zM1 7.500h14M3.500 6v3M12.500 6v3" /></Icon>
          </button>
        </div>
      </div>
    </section>
  );
}

const dockerTabs = [
  {
    name: "对齐与分布",
    height: "h-[103px]",
    active: true,
    art: (
      <>
        <path d="M1.500 0v15" stroke="#00a0e9" strokeDasharray="2 1" />
        <path d="M3.500 2.500h12v4h-12zM3.500 8.500h8v4h-8z" fill="#8f8b8b" />
      </>
    ),
  },
  {
    name: "变换",
    height: "h-[68px]",
    art: (
      <>
        <path d="M8 7a4.500 4.500 0 1 0 1.500 4" strokeWidth="1.500" />
        <path d="M12.500 0v7M9 3.500h7" />
        <path d="M11 2h3v3h-3z" fill="currentColor" stroke="none" />
      </>
    ),
  },
  {
    name: "造型",
    height: "h-[68px]",
    art: (
      <>
        <path d="M.5.5h9v9h-9zM5.500 5.500h9v9h-9z" />
        <path d="M5.500 5.500h4v4h-4z" fill="#00a0ff" />
      </>
    ),
  },
  {
    name: "圆角/扇形角/倒棱角",
    height: "h-[150px]",
    art: (
      <>
        <path d="M8 .5h7.500v14H.5V8L8 .5" />
        <path d="M.5 7V.5H7" strokeDasharray="1 1" />
      </>
    ),
  },
  {
    name: "使对象适合路径",
    height: "h-[128px]",
    art: (
      <>
        <path d="M1 12C3 2 10 0 15 11" strokeWidth="1.300" />
        <path d="M0 9h4v4H0z" fill="#00a0ff" stroke="none" />
        <path d="M6 2h5v4H6z" fill="#e4800f" stroke="none" />
        <path d="M12 9h3v4h-3z" fill="#0a7440" stroke="none" />
      </>
    ),
  },
];

function DockerTabs() {
  return (
    <div className="flex w-5 shrink-0 flex-col border-l border-[#b0b0b0] bg-[#e7e7e7]">
      {dockerTabs.map((tab) => (
        <button
          key={tab.name}
          type="button"
          className={`flex shrink-0 flex-col items-center gap-1 border-b border-white pt-1 pr-px ${tab.height} ${tab.active ? "bg-[#b1adac]" : "bg-[#d5d5d5]"}`}
        >
          <Icon smooth className="text-[#333]">{tab.art}</Icon>
          <span className="leading-4 whitespace-nowrap [text-orientation:sideways] [writing-mode:vertical-rl]">{tab.name}</span>
        </button>
      ))}
      <button type="button" aria-label="添加泊坞窗" className="mt-4 flex justify-center">
        <PlusCircle />
      </button>
    </div>
  );
}

function RightSide() {
  return (
    <div className="flex w-[289px] shrink-0 flex-col">
      <div className="flex h-[19px] shrink-0 items-center bg-[#e7e7e7] pr-1 pl-[2px]">
        <h2 className="flex-1">对齐与分布</h2>
        <button type="button" aria-label="折叠泊坞窗" className="mr-2 text-[#b0b0b0]">
          <Icon size={10} smooth><path d="M0 1v8l5-4zM5 1v8l5-4z" fill="currentColor" stroke="none" /></Icon>
        </button>
        <button type="button" aria-label="关闭泊坞窗" className="text-[#b0b0b0]">
          <Icon size={10} smooth><path d="M1 1l8 8M9 1L1 9" strokeWidth="1.800" /></Icon>
        </button>
      </div>
      <div className="flex min-h-0 flex-1 border-t border-[#b0b0b0]">
        <Docker />
        <DockerTabs />
      </div>
    </div>
  );
}

function ColorPalette() {
  return (
    <div className="flex w-[21px] shrink-0 flex-col items-center bg-[#f3f3f3] text-[#b5b5b5]">
      <div className="mt-[2px] h-[6px] w-4 bg-[radial-gradient(#c0c0c0_1px,transparent_1px)] bg-[size:3px_3px]" />
      <button type="button" aria-label="调色板选项" className="mt-[5px] text-black"><Tri dir="right" /></button>
      <button type="button" aria-label="取色" className="mt-2"><Dropper /></button>
      <button type="button" aria-label="向上" className="mt-[6px] mb-[6px]">
        <Icon size={8} smooth><path d="M0 6l4-4 4 4" strokeWidth="2" /></Icon>
      </button>
      <div className="flex"><NoColor size={17} label="无颜色" /></div>
      {swatches.map((c, i) => (
        <button
          key={i}
          type="button"
          aria-label={c}
          className={`h-[17px] w-[18px] shrink-0 border-x border-b border-[#55535a] ${i === 2 ? "relative z-10 border-t outline outline-white" : ""}`}
          style={{ backgroundColor: c }}
        />
      ))}
      <button type="button" aria-label="向下" className="mt-1">
        <Icon size={8} smooth><path d="M0 2l4 4 4-4" strokeWidth="2" /></Icon>
      </button>
      <button type="button" aria-label="展开" className="mt-2">
        <Icon size={8} smooth><path d="M0 0l4 4-4 4M4 0l4 4-4 4" /></Icon>
      </button>
    </div>
  );
}

/* ---------- status bar ---------- */

function StatusBar() {
  return (
    <footer className="relative flex h-[38px] shrink-0 items-center border-t border-[#d6d6d6] text-[11px] text-black">
      <span className="w-[125px] pl-[7px] whitespace-pre">( 315.375, -29.767 )</span>
      <button type="button" aria-label="光标位置选项"><Tri dir="right" /></button>
      <div className="ml-auto flex w-[231px] items-center">
        <Icon className="text-[#222]">
          <path d="M.5.5h15v11H.5zM8 12v3M3 15.500h10" />
          <path d="M2 2h12v4H2z" fill="#e00546" stroke="none" />
          <path d="M2 6h12v4H2z" fill="#00a0ff" stroke="none" />
          <circle cx="8" cy="6" r="2" fill="#fff" shapeRendering="auto" />
        </Icon>
        <div className="ml-[18px] flex items-center text-[#333]">
          <FillIcon />
          <NoColor size={22} label="填充颜色" />
          <span className="ml-1 text-[12px] text-black">无</span>
        </div>
      </div>
      <div className="h-[22px] w-px bg-[#d0d0d0]" />
      <div className="flex w-[225px] items-center pl-3">
        <Icon smooth className="text-[#333]">
          <path d="M8 0l4 8-2 3H6L4 8zM8 1v7M5.500 12.500h5v3h-5z" />
          <circle cx="8" cy="8" r="1" />
        </Icon>
        <button type="button" aria-label="轮廓颜色" className="size-[22px] border border-[#b0b0b0] bg-[#221319]" />
        <span className="ml-[5px] whitespace-pre">{"C: 0 M: 0 Y: 0 K: 100  .200 mm"}</span>
      </div>
      {/* mouse pointer */}
      <svg width="12" height="17" viewBox="0 0 12 17" className="absolute right-[97px] -bottom-1" aria-hidden="true">
        <path d="M.7 1v13.500l3-3 2 5 2.500-1-2-4.500H11z" fill="#fff" stroke="#222" />
      </svg>
    </footer>
  );
}

export default function App() {
  return (
    <div className="flex h-screen min-h-[793px] flex-col overflow-hidden bg-[#fdfdfd] pr-[2px] pb-[3px] pl-[3px] font-['Noto_Sans','Noto_Sans_CJK_SC',sans-serif] text-[12px] leading-4 text-black">
      <TitleBar />
      <MenuBar />
      <div className="flex min-h-0 flex-1 flex-col bg-[#f3f3f3]">
        <StandardBar />
        <PropertyBar />
        <div className="flex min-h-0 flex-1">
          <Toolbox />
          <DrawingWindow />
          <div className="flex w-[5px] shrink-0 bg-white pl-[2px]"><div className="w-px bg-[#d0d0d0]" /></div>
          <RightSide />
          <ColorPalette />
        </div>
        <StatusBar />
      </div>
    </div>
  );
}
